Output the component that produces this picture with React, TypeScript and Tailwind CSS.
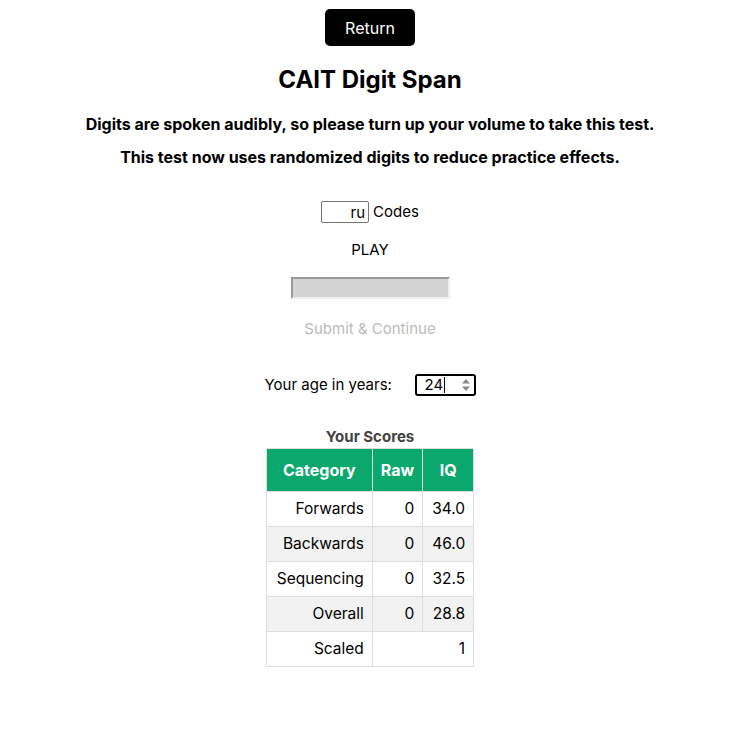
export default function App() {
  const rows = [
    { name: 'Forwards', raw: '0', iq: '34.0' },
    { name: 'Backwards', raw: '0', iq: '46.0' },
    { name: 'Sequencing', raw: '0', iq: '32.5' },
    { name: 'Overall', raw: '0', iq: '28.8' },
  ];
  return (
    <div className="flex flex-col items-center bg-white text-black font-['Inter',sans-serif] min-h-[745px] pl-[5px]">
      <button className="mt-[9px] w-[90px] h-[37px] rounded-[5px] bg-black text-white text-[16px]">Return</button>
      <h1 className="mt-[19px] text-[24px] font-bold leading-[30px]">CAIT Digit Span</h1>
      <p className="mt-[18px] text-[16px] font-bold leading-[22px]">
        Digits are spoken audibly, so please turn up your volume to take this test.
      </p>
      <p className="mt-[11px] text-[16px] font-bold leading-[22px]">
        This test now uses randomized digits to reduce practice effects.
      </p>
      <div className="mt-[33px] flex items-center gap-[4px] text-[15px]">
        <div className="w-[48px] h-[22px] border border-[#767676] rounded-[2px] flex items-center justify-end pr-[3px] leading-none">ru</div>
        <span>Codes</span>
      </div>
      <div className="mt-[16px] text-[15px] leading-[20px]">PLAY</div>
      <div className="mt-[17px] w-[159px] h-[22px] bg-[#d3d3d3] border-t-2 border-l-2 border-[#999] border-b-2 border-b-[#eee] border-r-2 border-r-[#eee]"></div>
      <div className="mt-[20px] text-[15px] text-[#bbb] leading-[20px]">Submit &amp; Continue</div>
      <div className="mt-[35px] flex items-center text-[15px]">
        <span className="w-[150px]">Your age in years:</span>
        <div className="w-[61px] h-[22px] border-2 border-black rounded-[3px] flex items-center pl-[8px] pr-[3px]">
          <span className="leading-none">24</span>
          <span className="w-px h-[16px] bg-black ml-px" />
          <span className="flex-1" />
          <svg width="10" height="14" viewBox="0 0 10 14" className="text-[#888]">
            <path d="M5 1 L9 5.5 L1 5.5 Z" fill="currentColor" />
            <path d="M5 13 L9 8.5 L1 8.5 Z" fill="currentColor" />
          </svg>
        </div>
      </div>
      <div className="mt-[32px] text-[15px] font-bold text-[#444] leading-[18px]">Your Scores</div>
      <table className="mt-[2px] border-collapse text-[15.5px]">
        <thead>
          <tr className="bg-[#0aa86c] text-white font-bold text-[16px] h-[43px]">
            <th className="w-[106px] border border-[#ddd] px-[8px] text-center">Category</th>
            <th className="w-[50px] border border-[#ddd] px-[8px] text-center">Raw</th>
            <th className="w-[51px] border border-[#ddd] px-[8px] text-center">IQ</th>
          </tr>
        </thead>
        <tbody>
          {rows.map((r, i) => (
            <tr key={r.name} className={`h-[35px] ${i % 2 === 1 ? 'bg-[#f2f2f2]' : 'bg-white'}`}>
              <td className="border border-[#ddd] px-[8px] text-right">{r.name}</td>
              <td className="border border-[#ddd] px-[8px] text-right">{r.raw}</td>
              <td className="border border-[#ddd] px-[8px] text-right">{r.iq}</td>
            </tr>
          ))}
          <tr className="h-[35px] bg-white">
            <td className="border border-[#ddd] px-[8px] text-right">Scaled</td>
            <td colSpan={2} className="border border-[#ddd] px-[8px] text-right">1</td>
          </tr>
        </tbody>
      </table>
    </div>
  );
}
